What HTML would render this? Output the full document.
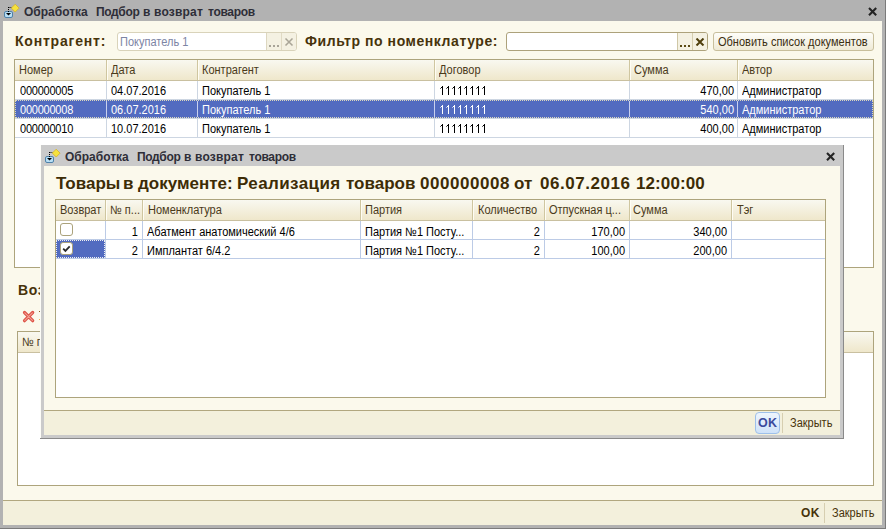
<!DOCTYPE html>
<html><head><meta charset="utf-8">
<style>
*{box-sizing:border-box;margin:0;padding:0}
html,body{width:887px;height:529px;overflow:hidden;background:#ffffff;font-family:"Liberation Sans",sans-serif;font-size:11px;color:#000}
.a{position:absolute}
.t{position:absolute;white-space:nowrap;line-height:12px;font-size:12px;transform:scaleX(0.917);transform-origin:0 0}
.win{position:absolute;background:#b2b2b2}
.cream{position:absolute;background:#fbf9ec}
.ttl{position:absolute;font-weight:bold;font-size:12px;line-height:12px;color:#2e2e38;white-space:nowrap}
.lbl{position:absolute;font-weight:bold;font-size:14px;line-height:14px;color:#47330a;white-space:nowrap;letter-spacing:0.6px}
.tbl{position:absolute;background:#fff;border:1px solid #ada47c}
.hdr{position:absolute;left:0;right:0;top:0;height:21px;background:linear-gradient(#f9f8f0,#efe7cb);border-bottom:1px solid #c9c0a0}
.hsep{position:absolute;top:0;height:20px;width:2px;border-left:1px solid #cfc6a0;border-right:1px solid #fffdf4}
.vsep{position:absolute;width:1px;background:#cdd6e2}
.hline{position:absolute;height:1px;background:#cdd6e2}
.ht{position:absolute;white-space:nowrap;font-size:12px;line-height:12px;color:#4a3a1a;transform:scaleX(0.917);transform-origin:0 0}
.bt{position:absolute;white-space:nowrap;font-size:12px;line-height:12px;color:#000;transform:scaleX(0.917);transform-origin:0 0}
.r{text-align:right;transform-origin:100% 0}
.sel{position:absolute;background:#526bc0}
.x{position:absolute}
.hd span{position:absolute;top:175px;font-weight:bold;font-size:17px;line-height:17px;color:#3d2c06;white-space:nowrap}
</style></head><body>

<!-- MAIN WINDOW -->
<div class="win" style="left:0;top:0;width:886px;height:529px"></div>
<div class="a" style="left:885px;top:0;width:1px;height:529px;background:#7b7b7b"></div>
<div class="a" style="left:0;top:528px;width:886px;height:1px;background:#7b7b7b"></div>
<div class="cream" style="left:3px;top:21px;width:879px;height:504px"></div>

<!-- title icon -->
<svg class="a" style="left:3px;top:2px" width="18" height="17" viewBox="0 0 18 17">
  <rect x="1.5" y="9.5" width="8" height="6" rx="1.5" fill="#b8def4" stroke="#4f82aa"/>
  <path d="M5.5 5v7" stroke="#000" stroke-width="1" stroke-dasharray="1 1"/>
  <path d="M5.5 5.5h3" stroke="#000" stroke-width="1" stroke-dasharray="1 1"/>
  <path d="M3 11h5l-2.5 2.5z" fill="#000"/>
  <path d="M12.2 2.2l3.9 3.9-3.9 3.9-3.9-3.9z" fill="#f6e23e" stroke="#d5b22a" stroke-width="0.8"/>
</svg>
<div class="ttl" style="left:24px;top:6px;letter-spacing:0px">Обработка</div><div class="ttl" style="left:96px;top:6px;letter-spacing:-0.35px">Подбор</div><div class="ttl" style="left:143px;top:6px;letter-spacing:0px">в</div><div class="ttl" style="left:154px;top:6px;letter-spacing:0.2px">возврат</div><div class="ttl" style="left:208px;top:6px;letter-spacing:-0.3px">товаров</div>
<svg class="a" style="left:867px;top:6px" width="12" height="12" viewBox="0 0 12 12"><path d="M2 2l7.2 7.2M9.2 2l-7.2 7.2" stroke="#242424" stroke-width="2.1"/></svg>

<!-- labels & inputs -->
<div class="lbl" style="left:15px;top:34px;letter-spacing:0.8px">Контрагент:</div>
<div class="a" style="left:117px;top:32px;width:180px;height:19px;border:1px solid #d9d3ba;border-radius:3px;background:#fff;overflow:hidden">
  <div class="a" style="left:148px;top:0;width:30px;height:17px;background:#f4f1e2;border-left:1px solid #ddd7c0"></div>
  <div class="a" style="left:163px;top:0;width:1px;height:17px;background:#e0dac4"></div>
</div>
<div class="t" style="left:120px;top:36px;color:#7c84a4">Покупатель 1</div>
<div class="a" style="left:269px;top:45px;width:2px;height:2px;background:#a8a498"></div>
<div class="a" style="left:273px;top:45px;width:2px;height:2px;background:#a8a498"></div>
<div class="a" style="left:277px;top:45px;width:2px;height:2px;background:#a8a498"></div>
<svg class="a" style="left:284px;top:38px" width="10" height="8" viewBox="0 0 10 8"><path d="M1.5 0.5l7 7M8.5 0.5l-7 7" stroke="#a9a597" stroke-width="1.5"/></svg>

<div class="lbl" style="left:305px;top:34px;letter-spacing:0.56px">Фильтр по номенклатуре:</div>
<div class="a" style="left:506px;top:32px;width:202px;height:19px;border:1px solid #ada27b;border-radius:3px;background:#fff;overflow:hidden">
  <div class="a" style="left:170px;top:0;width:30px;height:17px;background:#f4f1e2;border-left:1px solid #cfc7a6"></div>
  <div class="a" style="left:185px;top:0;width:1px;height:17px;background:#d5ceb0"></div>
</div>
<div class="a" style="left:680px;top:45px;width:2px;height:2px;background:#5a4a12"></div>
<div class="a" style="left:684px;top:45px;width:2px;height:2px;background:#5a4a12"></div>
<div class="a" style="left:688px;top:45px;width:2px;height:2px;background:#5a4a12"></div>
<svg class="a" style="left:695px;top:38px" width="10" height="8" viewBox="0 0 10 8"><path d="M1.5 0.5l7 7M8.5 0.5l-7 7" stroke="#4e3e0c" stroke-width="2"/></svg>

<div class="a" style="left:713px;top:32px;width:161px;height:19px;border:1px solid #c8bf9c;border-radius:3px;background:linear-gradient(#fefefa,#efead6)"></div>
<div class="t" style="left:718px;top:36px;color:#3a2e10">Обновить список документов</div>

<!-- TABLE 1 -->
<div class="tbl" style="left:14px;top:59px;width:860px;height:209px">
  <div class="hdr"></div>
  <div class="hsep" style="left:91px"></div>
  <div class="hsep" style="left:182px"></div>
  <div class="hsep" style="left:419px"></div>
  <div class="hsep" style="left:614px"></div>
  <div class="hsep" style="left:722px"></div>
</div>
<div class="vsep" style="left:106px;top:81px;height:56px"></div>
<div class="vsep" style="left:197px;top:81px;height:56px"></div>
<div class="vsep" style="left:434px;top:81px;height:56px"></div>
<div class="vsep" style="left:629px;top:81px;height:56px"></div>
<div class="vsep" style="left:737px;top:81px;height:56px"></div>
<div class="hline" style="left:15px;top:99px;width:858px"></div>
<div class="hline" style="left:15px;top:118px;width:858px"></div>
<div class="hline" style="left:15px;top:137px;width:858px"></div>
<div class="sel" style="left:15px;top:100px;width:858px;height:18px;outline:1px dotted #dcd8bc;outline-offset:-1px"></div>
<div class="a" style="left:106px;top:101px;width:1px;height:16px;background:#c8d0ee"></div>
<div class="a" style="left:197px;top:101px;width:1px;height:16px;background:#c8d0ee"></div>
<div class="a" style="left:434px;top:101px;width:1px;height:16px;background:#c8d0ee"></div>
<div class="a" style="left:629px;top:101px;width:1px;height:16px;background:#c8d0ee"></div>
<div class="a" style="left:737px;top:101px;width:1px;height:16px;background:#c8d0ee"></div>

<div class="ht" style="left:19px;top:64px">Номер</div>
<div class="ht" style="left:111px;top:64px">Дата</div>
<div class="ht" style="left:202px;top:64px">Контрагент</div>
<div class="ht" style="left:439px;top:64px">Договор</div>
<div class="ht" style="left:634px;top:64px">Сумма</div>
<div class="ht" style="left:742px;top:64px">Автор</div>

<div class="bt" style="letter-spacing:-0.25px;left:20px;top:85px">000000005</div>
<div class="bt" style="left:111px;top:85px">04.07.2016</div>
<div class="bt" style="left:202px;top:85px">Покупатель 1</div>
<svg class="a" style="left:434px;top:86px" width="60" height="9" fill="#000" shape-rendering="crispEdges"><rect x="8" y="0" width="1" height="9"/><rect x="7" y="1" width="1" height="1"/><rect x="6" y="2" width="1" height="1" opacity="0.6"/><rect x="14" y="0" width="1" height="9"/><rect x="13" y="1" width="1" height="1"/><rect x="12" y="2" width="1" height="1" opacity="0.6"/><rect x="20" y="0" width="1" height="9"/><rect x="19" y="1" width="1" height="1"/><rect x="18" y="2" width="1" height="1" opacity="0.6"/><rect x="26" y="0" width="1" height="9"/><rect x="25" y="1" width="1" height="1"/><rect x="24" y="2" width="1" height="1" opacity="0.6"/><rect x="32" y="0" width="1" height="9"/><rect x="31" y="1" width="1" height="1"/><rect x="30" y="2" width="1" height="1" opacity="0.6"/><rect x="38" y="0" width="1" height="9"/><rect x="37" y="1" width="1" height="1"/><rect x="36" y="2" width="1" height="1" opacity="0.6"/><rect x="44" y="0" width="1" height="9"/><rect x="43" y="1" width="1" height="1"/><rect x="42" y="2" width="1" height="1" opacity="0.6"/><rect x="50" y="0" width="1" height="9"/><rect x="49" y="1" width="1" height="1"/><rect x="48" y="2" width="1" height="1" opacity="0.6"/></svg>
<div class="bt r" style="left:630px;width:104px;top:85px">470,00</div>
<div class="bt" style="left:742px;top:85px">Администратор</div>

<div class="bt" style="letter-spacing:-0.25px;left:20px;top:104px;color:#fff">000000008</div>
<div class="bt" style="left:111px;top:104px;color:#fff">06.07.2016</div>
<div class="bt" style="left:202px;top:104px;color:#fff">Покупатель 1</div>
<svg class="a" style="left:434px;top:105px" width="60" height="9" fill="#fff" shape-rendering="crispEdges"><rect x="8" y="0" width="1" height="9"/><rect x="7" y="1" width="1" height="1"/><rect x="6" y="2" width="1" height="1" opacity="0.6"/><rect x="14" y="0" width="1" height="9"/><rect x="13" y="1" width="1" height="1"/><rect x="12" y="2" width="1" height="1" opacity="0.6"/><rect x="20" y="0" width="1" height="9"/><rect x="19" y="1" width="1" height="1"/><rect x="18" y="2" width="1" height="1" opacity="0.6"/><rect x="26" y="0" width="1" height="9"/><rect x="25" y="1" width="1" height="1"/><rect x="24" y="2" width="1" height="1" opacity="0.6"/><rect x="32" y="0" width="1" height="9"/><rect x="31" y="1" width="1" height="1"/><rect x="30" y="2" width="1" height="1" opacity="0.6"/><rect x="38" y="0" width="1" height="9"/><rect x="37" y="1" width="1" height="1"/><rect x="36" y="2" width="1" height="1" opacity="0.6"/><rect x="44" y="0" width="1" height="9"/><rect x="43" y="1" width="1" height="1"/><rect x="42" y="2" width="1" height="1" opacity="0.6"/><rect x="50" y="0" width="1" height="9"/><rect x="49" y="1" width="1" height="1"/><rect x="48" y="2" width="1" height="1" opacity="0.6"/></svg>
<div class="bt r" style="left:630px;width:104px;top:104px;color:#fff">540,00</div>
<div class="bt" style="left:742px;top:104px;color:#fff">Администратор</div>

<div class="bt" style="letter-spacing:-0.25px;left:20px;top:123px">000000010</div>
<div class="bt" style="left:111px;top:123px">10.07.2016</div>
<div class="bt" style="left:202px;top:123px">Покупатель 1</div>
<svg class="a" style="left:434px;top:124px" width="60" height="9" fill="#000" shape-rendering="crispEdges"><rect x="8" y="0" width="1" height="9"/><rect x="7" y="1" width="1" height="1"/><rect x="6" y="2" width="1" height="1" opacity="0.6"/><rect x="14" y="0" width="1" height="9"/><rect x="13" y="1" width="1" height="1"/><rect x="12" y="2" width="1" height="1" opacity="0.6"/><rect x="20" y="0" width="1" height="9"/><rect x="19" y="1" width="1" height="1"/><rect x="18" y="2" width="1" height="1" opacity="0.6"/><rect x="26" y="0" width="1" height="9"/><rect x="25" y="1" width="1" height="1"/><rect x="24" y="2" width="1" height="1" opacity="0.6"/><rect x="32" y="0" width="1" height="9"/><rect x="31" y="1" width="1" height="1"/><rect x="30" y="2" width="1" height="1" opacity="0.6"/><rect x="38" y="0" width="1" height="9"/><rect x="37" y="1" width="1" height="1"/><rect x="36" y="2" width="1" height="1" opacity="0.6"/><rect x="44" y="0" width="1" height="9"/><rect x="43" y="1" width="1" height="1"/><rect x="42" y="2" width="1" height="1" opacity="0.6"/><rect x="50" y="0" width="1" height="9"/><rect x="49" y="1" width="1" height="1"/><rect x="48" y="2" width="1" height="1" opacity="0.6"/></svg>
<div class="bt r" style="left:630px;width:104px;top:123px">400,00</div>
<div class="bt" style="left:742px;top:123px">Администратор</div>

<!-- Section 2 -->
<div class="lbl" style="left:18px;top:283px">Возврат</div>
<svg class="a" style="left:22px;top:310px" width="14" height="14" viewBox="0 0 14 14"><path d="M2.5 2.5l8.2 8.2M10.7 2.5l-8.2 8.2" stroke="#dd5246" stroke-width="3.2" stroke-linecap="round"/><path d="M2.8 2.8l7.6 7.6M10.4 2.8l-7.6 7.6" stroke="#f3a094" stroke-width="1.1" stroke-linecap="round"/></svg>
<div class="a" style="left:39px;top:311px;width:1px;height:1px;background:#8a5a20"></div><div class="a" style="left:39px;top:319px;width:1px;height:1px;background:#f0b060"></div>
<div class="tbl" style="left:17px;top:331px;width:857px;height:155px">
  <div class="hdr"></div>
</div>
<div class="ht" style="left:22px;top:336px">№ п</div>

<!-- main footer -->
<div class="a" style="left:3px;top:500px;width:879px;height:1px;background:#b1a77f"></div>
<div class="a" style="left:3px;top:501px;width:879px;height:24px;background:#f3f0dc"></div>
<div class="a" style="left:801px;top:507px;font-weight:bold;font-size:12px;line-height:12px;color:#47330a;letter-spacing:0.3px">OK</div>
<div class="a" style="left:824px;top:503px;width:1px;height:20px;background:#d6ceb0"></div>
<div class="t" style="left:832px;top:507px;color:#47330a">Закрыть</div>

<!-- DIALOG -->
<div class="a" style="left:41px;top:145px;width:803px;height:294px;background:#cacaca"></div>
<div class="a" style="left:843px;top:145px;width:1px;height:294px;background:#8a8a8a"></div>
<div class="a" style="left:40px;top:438px;width:804px;height:1px;background:#8a8a8a"></div>
<div class="a" style="left:40px;top:145px;width:1px;height:293px;background:#fdfdf8"></div>
<div class="cream" style="left:44px;top:166px;width:796px;height:269px"></div>
<svg class="a" style="left:44px;top:147px" width="18" height="17" viewBox="0 0 18 17">
  <rect x="1.5" y="9.5" width="8" height="6" rx="1.5" fill="#b8def4" stroke="#4f82aa"/>
  <path d="M5.5 5v7" stroke="#000" stroke-width="1" stroke-dasharray="1 1"/>
  <path d="M5.5 5.5h3" stroke="#000" stroke-width="1" stroke-dasharray="1 1"/>
  <path d="M3 11h5l-2.5 2.5z" fill="#000"/>
  <path d="M12.2 2.2l3.9 3.9-3.9 3.9-3.9-3.9z" fill="#f6e23e" stroke="#d5b22a" stroke-width="0.8"/>
</svg>
<div class="ttl" style="left:65px;top:151px;letter-spacing:0px">Обработка</div><div class="ttl" style="left:137px;top:151px;letter-spacing:-0.35px">Подбор</div><div class="ttl" style="left:184px;top:151px;letter-spacing:0px">в</div><div class="ttl" style="left:195px;top:151px;letter-spacing:0.2px">возврат</div><div class="ttl" style="left:249px;top:151px;letter-spacing:-0.3px">товаров</div>
<svg class="a" style="left:825px;top:151px" width="12" height="12" viewBox="0 0 12 12"><path d="M2 2l7.2 7.2M9.2 2l-7.2 7.2" stroke="#242424" stroke-width="2.1"/></svg>

<div class="hd"><span style="left:56px">Товары</span><span style="left:123px">в</span><span style="left:138px">документе:</span><span style="left:237px;letter-spacing:0.4px">Реализация</span><span style="left:346px">товаров</span><span style="left:420px;letter-spacing:0.55px">000000008</span><span style="left:514px">от</span><span style="left:540px;letter-spacing:0.55px">06.07.2016</span><span style="left:636px;letter-spacing:0.1px">12:00:00</span></div>

<div class="tbl" style="left:55px;top:199px;width:771px;height:199px">
  <div class="hdr"></div>
  <div class="hsep" style="left:49px"></div>
  <div class="hsep" style="left:86px"></div>
  <div class="hsep" style="left:304px"></div>
  <div class="hsep" style="left:416px"></div>
  <div class="hsep" style="left:488px"></div>
  <div class="hsep" style="left:573px"></div>
  <div class="hsep" style="left:675px"></div>
</div>
<div class="vsep" style="left:105px;top:221px;height:37px;background:#bccbe6"></div>
<div class="vsep" style="left:142px;top:221px;height:37px;background:#bccbe6"></div>
<div class="vsep" style="left:360px;top:221px;height:37px;background:#bccbe6"></div>
<div class="vsep" style="left:472px;top:221px;height:37px;background:#bccbe6"></div>
<div class="vsep" style="left:544px;top:221px;height:37px;background:#bccbe6"></div>
<div class="vsep" style="left:629px;top:221px;height:37px;background:#bccbe6"></div>
<div class="vsep" style="left:731px;top:221px;height:37px;background:#bccbe6"></div>
<div class="hline" style="left:56px;top:239px;width:769px;background:#bccbe6"></div>
<div class="hline" style="left:56px;top:258px;width:769px;background:#bccbe6"></div>
<div class="sel" style="left:56px;top:240px;width:49px;height:18px;outline:1px dotted #f0f0f0;outline-offset:-1px"></div>

<div class="ht" style="left:60px;top:204px">Возврат</div>
<div class="ht" style="left:110px;top:204px">№ п...</div>
<div class="ht" style="left:148px;top:204px">Номенклатура</div>
<div class="ht" style="left:365px;top:204px">Партия</div>
<div class="ht" style="left:478px;top:204px">Количество</div>
<div class="ht" style="left:549px;top:204px">Отпускная ц...</div>
<div class="ht" style="left:633px;top:204px">Сумма</div>
<div class="ht" style="left:737px;top:204px">Тэг</div>

<div class="a" style="left:60px;top:223px;width:13px;height:13px;border:1px solid #aba27b;border-radius:3px;background:#fff"></div>
<div class="a" style="left:60px;top:242px;width:13px;height:13px;border:1px solid #aba27b;border-radius:3px;background:#fff"></div>
<svg class="a" style="left:60px;top:242px" width="13" height="13" viewBox="0 0 13 13"><path d="M3.2 6.6l2.2 2.3 4.3-4.6" stroke="#2a2a2a" stroke-width="1.8" fill="none"/></svg>

<div class="bt r" style="left:106px;width:32px;top:226px">1</div>
<div class="bt" style="left:147px;top:226px">Абатмент анатомический 4/6</div>
<div class="bt" style="left:365px;top:226px">Партия №1 Посту...</div>
<div class="bt r" style="left:473px;width:67px;top:226px">2</div>
<div class="bt r" style="left:545px;width:80px;top:226px">170,00</div>
<div class="bt r" style="left:631px;width:96px;top:226px">340,00</div>

<div class="bt r" style="left:106px;width:32px;top:245px">2</div>
<div class="bt" style="left:147px;top:245px">Имплантат 6/4.2</div>
<div class="bt" style="left:365px;top:245px">Партия №1 Посту...</div>
<div class="bt r" style="left:473px;width:67px;top:245px">2</div>
<div class="bt r" style="left:545px;width:80px;top:245px">100,00</div>
<div class="bt r" style="left:631px;width:96px;top:245px">200,00</div>

<!-- dialog footer -->
<div class="a" style="left:44px;top:410px;width:796px;height:1px;background:#b1a77f"></div>
<div class="a" style="left:44px;top:411px;width:796px;height:24px;background:#f3f0dc"></div>
<div class="a" style="left:755px;top:412px;width:25px;height:22px;border:1px solid #9ec0ea;border-radius:4px;background:linear-gradient(#eef5fd,#cfe2f8)"></div>
<div class="a" style="left:758px;top:417px;font-weight:bold;font-size:12.5px;line-height:13px;color:#3b4a9c;letter-spacing:0.2px">OK</div>
<div class="a" style="left:782px;top:413px;width:1px;height:20px;background:#d6ceb0"></div>
<div class="t" style="left:790px;top:417px;color:#47330a">Закрыть</div>

</body></html>
